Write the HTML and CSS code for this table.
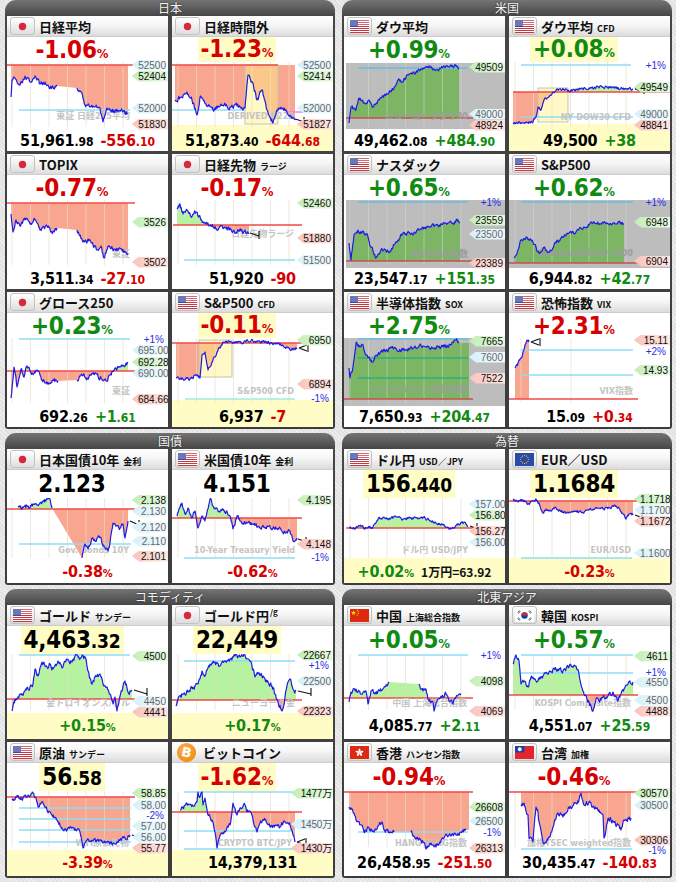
FILE: index.html
```html
<!DOCTYPE html>
<html lang="ja">
<head>
<meta charset="utf-8">
<title>マーケット</title>
<link rel="stylesheet" href="styles.css">
</head>
<body>
<svg class="defs" width="0" height="0" aria-hidden="true">
 <defs>
  <symbol id="f-jp" viewBox="0 0 19 13"><circle cx="9.5" cy="6.5" r="3.7" fill="#d8283a"/></symbol>
  <symbol id="f-us" viewBox="0 0 19 13"><rect width="19" height="13" fill="#fff"/><path d="M0 0h19v1H0zM0 2h19v1H0zM0 4h19v1H0zM0 6h19v1H0zM0 8h19v1H0zM0 10h19v1H0zM0 12h19v1H0z" fill="#c9363f"/><rect width="8" height="7" fill="#3b4aa0"/><rect width="19" height="6" fill="#fff" opacity=".25"/></symbol>
  <symbol id="f-cn" viewBox="0 0 19 13"><rect width="19" height="13" fill="#de2910"/><polygon points="3.5,1.3 4.1,3.1 6,3.1 4.5,4.2 5.1,6 3.5,4.9 1.9,6 2.5,4.2 1,3.1 2.9,3.1" fill="#ffde00"/><circle cx="7.2" cy="1.4" r=".6" fill="#ffde00"/><circle cx="8.3" cy="2.8" r=".6" fill="#ffde00"/><circle cx="8.3" cy="4.6" r=".6" fill="#ffde00"/><circle cx="7.2" cy="6" r=".6" fill="#ffde00"/></symbol>
  <symbol id="f-kr" viewBox="0 0 19 13"><rect width="19" height="13" fill="#fff"/><circle cx="9.5" cy="6.5" r="3.2" fill="#0047a0"/><path d="M6.3 6.5a3.2 3.2 0 0 1 6.4 0z" fill="#cd2e3a"/><path d="M2.5 3.6l2.2-2M3.2 4.3l2.2-2M14.3 1.6l2.2 2M13.6 2.3l2.2 2M2.5 9.4l2.2 2M3.2 8.7l2.2 2M14.3 11.4l2.2-2M13.6 10.7l2.2-2" stroke="#111" stroke-width=".7"/></symbol>
  <symbol id="f-eu" viewBox="0 0 19 13"><rect width="19" height="13" fill="#2a4aa8"/><g fill="#ffd800"><circle cx="9.5" cy="2.6" r=".55"/><circle cx="11.45" cy="3.1" r=".55"/><circle cx="12.9" cy="4.55" r=".55"/><circle cx="13.4" cy="6.5" r=".55"/><circle cx="12.9" cy="8.45" r=".55"/><circle cx="11.45" cy="9.9" r=".55"/><circle cx="9.5" cy="10.4" r=".55"/><circle cx="7.55" cy="9.9" r=".55"/><circle cx="6.1" cy="8.45" r=".55"/><circle cx="5.6" cy="6.5" r=".55"/><circle cx="6.1" cy="4.55" r=".55"/><circle cx="7.55" cy="3.1" r=".55"/></g></symbol>
  <symbol id="f-hk" viewBox="0 0 19 13"><rect width="19" height="13" fill="#de2910"/><g fill="#fff"><ellipse cx="9.5" cy="4.4" rx="1" ry="2"/><ellipse cx="9.5" cy="4.4" rx="1" ry="2" transform="rotate(72 9.5 6.5)"/><ellipse cx="9.5" cy="4.4" rx="1" ry="2" transform="rotate(144 9.5 6.5)"/><ellipse cx="9.5" cy="4.4" rx="1" ry="2" transform="rotate(216 9.5 6.5)"/><ellipse cx="9.5" cy="4.4" rx="1" ry="2" transform="rotate(288 9.5 6.5)"/></g></symbol>
  <symbol id="f-tw" viewBox="0 0 19 13"><rect width="19" height="13" fill="#e3262d"/><rect width="9.5" height="6.5" fill="#1f3e9e"/><circle cx="4.75" cy="3.25" r="1.9" fill="#fff"/></symbol>
 </defs>
</svg>

<main class="page">

<!-- ===================== 日本 ===================== -->
<section class="sec">
 <h2 class="sh">日本</h2>
 <div class="cards">

  <div class="card idx">
   <div class="ch"><span class="fg"><svg><use href="#f-jp"/></svg></span><span class="nm">日経平均</span></div>
   <div class="top"><span class="pct dn">-1.06<small>%</small></span></div>
   <div class="chart">
    <svg class="cv" viewBox="2 0 161 68" preserveAspectRatio="none" data-base="3" data-seed="1" data-pts="6,35 7,18 10,16 15,23 20,14 25,20 30,14 35,22 40,20 45,26 52,24 !72,26 76,30 80,43 88,44 95,46 98,60 102,46 110,50 116,48 123,51">
     <g class="fl"></g>
     <line class="hl" x1="14" x2="125" y1="48" y2="48"/>
     <line class="bl" x1="2" x2="130" y1="3" y2="3"/>
     <text class="wm" x="125" y="57">東証 日経225平均</text>
     <g class="ln"></g>
    </svg>
    <span class="tg b" style="--y:3px">52500</span>
    <span class="tg g" style="--y:14px">52404</span>
    <span class="tg b" style="--y:46px">52000</span>
    <span class="tg p" style="--y:62px">51830</span>
   </div>
   <div class="bot"><span class="v">51,961<small>.98</small></span><span class="dn">-556<small>.10</small></span></div>
  </div>

  <div class="card idx">
   <div class="ch"><span class="fg"><svg><use href="#f-jp"/></svg></span><span class="nm">日経時間外</span></div>
   <div class="top"><span class="pct dn yl">-1.23<small>%</small></span></div>
   <div class="chart">
    <svg class="cv" viewBox="1 0 161 68" preserveAspectRatio="none" data-base="3" data-seed="2" data-pts="4,38 11,35 16,30 21,38 26,53 29,35 35,42 42,48 50,42 59,45 66,44 74,46 77,13 82,21 86,38 91,28 96,48 102,61 106,48 112,46 119,53 124,58">
     <rect class="yb" x="0" y="63" width="170" height="6"/>
     <g class="fl"></g>
     <rect class="ybox" x="74" y="3" width="33" height="59"/>
     <line class="hl" x1="1" x2="74" y1="48" y2="48"/>
     <line class="mg" x1="114" x2="162" y1="50" y2="50"/>
     <line class="bl" x1="1" x2="107" y1="3" y2="3"/>
     <text class="wm" x="123" y="57">DERIVED N225</text>
     <g class="ln"></g>
     <path class="tk" d="M124 57L134 60M133 55V63"/>
    </svg>
    <span class="tg b" style="--y:3px">52500</span>
    <span class="tg g" style="--y:14px">52414</span>
    <span class="tg b" style="--y:46px">52000</span>
    <span class="tg p" style="--y:62px">51827</span>
   </div>
   <div class="bot y"><span class="v">51,873<small>.40</small></span><span class="dn">-644<small>.68</small></span></div>
  </div>

  <div class="card idx">
   <div class="ch"><span class="fg"><svg><use href="#f-jp"/></svg></span><span class="nm">TOPIX</span></div>
   <div class="top"><span class="pct dn">-0.77<small>%</small></span></div>
   <div class="chart">
    <svg class="cv" viewBox="2 0 161 68" preserveAspectRatio="none" data-base="3" data-seed="3" data-pts="6,14 8,32 11,20 15,26 20,18 25,24 30,20 35,30 42,26 48,32 52,28 !72,30 78,42 85,40 92,50 96,46 99,58 103,46 110,50 116,49 123,55">
     <g class="fl"></g>
     <line class="bl" x1="2" x2="130" y1="3" y2="3"/>
     <text class="wm" x="125" y="57">東証</text>
     <g class="ln"></g>
    </svg>
    <span class="tg g" style="--y:22px">3526</span>
    <span class="tg p" style="--y:62px">3502</span>
   </div>
   <div class="bot"><span class="v">3,511<small>.34</small></span><span class="dn">-27<small>.10</small></span></div>
  </div>

  <div class="card idx">
   <div class="ch"><span class="fg"><svg><use href="#f-jp"/></svg></span><span class="nm">日経先物<small>ラージ</small></span></div>
   <div class="top"><span class="pct dn">-0.17<small>%</small></span></div>
   <div class="chart">
    <svg class="cv" viewBox="1 0 161 68" preserveAspectRatio="none" data-base="25" data-seed="4" data-pts="6,8 9,4 12,14 16,10 20,17 25,12 30,20 35,24 40,26 48,28 55,27 62,31 70,31 78,33">
     <g class="fl"></g>
     <line class="hl" x1="13" x2="124" y1="60" y2="60"/>
     <line class="bl" x1="2" x2="131" y1="25" y2="25"/>
     <text class="wm" x="123" y="37">日経先物ラージ</text>
     <g class="ln"></g>
     <path class="tk" d="M79 33L88 36M88 31V39"/>
    </svg>
    <span class="tg g" style="--y:3px">52460</span>
    <span class="tg p" style="--y:38px">51880</span>
    <span class="tg b" style="--y:60px">51500</span>
   </div>
   <div class="bot"><span class="v">51,920</span><span class="dn">-90</span></div>
  </div>

  <div class="card idx">
   <div class="ch"><span class="fg"><svg><use href="#f-jp"/></svg></span><span class="nm">グロース250</span></div>
   <div class="top"><span class="pct up">+0.23<small>%</small></span></div>
   <div class="chart">
    <svg class="cv" viewBox="2 0 161 68" preserveAspectRatio="none" data-base="33" data-seed="5" data-pts="6,60 9,29 12,49 16,31 19,39 22,28 27,35 32,32 37,42 42,46 48,42 53,43 !72,42 77,37 82,40 88,36 95,40 102,43 105,37 110,30 115,29 123,25">
     <g class="fl"></g>
     <line class="hl" x1="14" x2="125" y1="1" y2="1"/>
     <line class="bl" x1="2" x2="130" y1="33" y2="33"/>
     <text class="wm" x="125" y="56">東証</text>
     <g class="ln"></g>
    </svg>
    <span class="tg t" style="--y:1px">+1%</span>
    <span class="tg b" style="--y:12px">695.00</span>
    <span class="tg g" style="--y:24px">692.28</span>
    <span class="tg b" style="--y:35px">690.00</span>
    <span class="tg p" style="--y:61px">684.66</span>
   </div>
   <div class="bot"><span class="v">692<small>.26</small></span><span class="up">+1<small>.61</small></span></div>
  </div>

  <div class="card idx">
   <div class="ch"><span class="fg"><svg><use href="#f-us"/></svg></span><span class="nm">S&amp;P500<small>CFD</small></span></div>
   <div class="top"><span class="pct dn yl">-0.11<small>%</small></span></div>
   <div class="chart">
    <svg class="cv" viewBox="1 0 161 68" preserveAspectRatio="none" data-base="5" data-seed="6" data-n="1.5" data-pts="5,40 12,41 19,41 26,37 29,40 31,17 34,14 37,32 41,24 46,14 49,10 52,4 59,4 69,4 82,3 96,4 106,6 116,9 122,12 126,10">
     <rect class="yb" x="0" y="62" width="170" height="7"/>
     <g class="fl"></g>
     <rect class="ybox" x="28" y="2" width="33" height="37"/>
     <line class="hl tl" x1="14" x2="124" y1="61" y2="61"/>
     <line class="bl" x1="1" x2="162" y1="5" y2="5"/>
     <text class="wm" x="123" y="56">S&amp;P500 CFD</text>
     <g class="ln"></g>
     <path class="tk" d="M128 10L136 7M128 10L136 13M137 6V14"/>
    </svg>
    <span class="tg g" style="--y:2px">6950</span>
    <span class="tg p" style="--y:46px">6894</span>
    <span class="tg t" style="--y:60px">-1%</span>
   </div>
   <div class="bot y"><span class="v">6,937</span><span class="dn">-7</span></div>
  </div>

 </div>
</section>

<!-- ===================== 米国 ===================== -->
<section class="sec">
 <h2 class="sh">米国</h2>
 <div class="cards">

  <div class="card idx">
   <div class="ch"><span class="fg"><svg><use href="#f-us"/></svg></span><span class="nm">ダウ平均</span></div>
   <div class="top"><span class="pct up">+0.99<small>%</small></span></div>
   <div class="chart">
    <svg class="cv gr" viewBox="1 0 161 68" preserveAspectRatio="none" data-base="56" data-seed="7" data-n="1.6" data-pts="6,61 8,45 13,48 16,36 21,41 26,38 30,45 36,38 43,33 50,28 55,18 60,20 65,13 73,10 80,6 86,4 93,8 100,5 106,5 113,4 116,7">
     <rect class="gbg" x="3" y="1" width="170" height="66"/>
     <g class="fl"></g>
     <line class="hl" x1="15" x2="125" y1="6" y2="6"/>
     <line class="bl" x1="3" x2="130" y1="56" y2="56"/>
     <text class="wm" x="125" y="57">ニューヨークダウ30</text>
     <g class="ln"></g>
    </svg>
    <span class="tg g" style="--y:5px">49509</span>
    <span class="tg b" style="--y:52px">49000</span>
    <span class="tg p" style="--y:63px">48924</span>
   </div>
   <div class="bot"><span class="v">49,462<small>.08</small></span><span class="up">+484<small>.90</small></span></div>
  </div>

  <div class="card idx">
   <div class="ch"><span class="fg"><svg><use href="#f-us"/></svg></span><span class="nm">ダウ平均<small>CFD</small></span></div>
   <div class="top"><span class="pct up yl">+0.08<small>%</small></span></div>
   <div class="chart">
    <svg class="cv" viewBox="1 0 161 68" preserveAspectRatio="none" data-base="30" data-seed="8" data-n="1.3" data-pts="5,61 15,61 25,60 28,55 30,45 33,48 36,38 41,35 45,30 51,27 58,27 61,29 68,27 81,26 95,25 108,26 118,27 125,27">
     <rect class="yb" x="0" y="62" width="170" height="7"/>
     <g class="fl"></g>
     <rect class="ybox" x="30" y="26" width="30" height="34"/>
     <line class="hl" x1="13" x2="123" y1="3" y2="3"/>
     <line class="hl" x1="13" x2="125" y1="55" y2="55"/>
     <line class="bl" x1="5" x2="162" y1="30" y2="30"/>
     <text class="wm" x="123" y="58">NY DOW30 CFD</text>
     <g class="ln"></g>
     <path class="tk" d="M127 27L135 24M127 27L135 30M136 23V32"/>
    </svg>
    <span class="tg t" style="--y:3px">+1%</span>
    <span class="tg g" style="--y:25px">49549</span>
    <span class="tg b" style="--y:52px">49000</span>
    <span class="tg p" style="--y:63px">48841</span>
   </div>
   <div class="bot y"><span class="v">49,500</span><span class="up">+38</span></div>
  </div>

  <div class="card idx">
   <div class="ch"><span class="fg"><svg><use href="#f-us"/></svg></span><span class="nm">ナスダック</span></div>
   <div class="top"><span class="pct up">+0.65<small>%</small></span></div>
   <div class="chart">
    <svg class="cv gr" viewBox="1 0 161 68" preserveAspectRatio="none" data-base="61" data-seed="9" data-n="1.8" data-pts="6,43 8,60 11,35 15,30 20,32 25,37 28,47 33,58 38,50 46,52 55,40 60,33 70,35 76,30 83,27 93,25 103,23 110,23 115,20 117,23">
     <rect class="gbg" x="3" y="0" width="170" height="68"/>
     <g class="fl"></g>
     <line class="hl" x1="15" x2="125" y1="2" y2="2"/>
     <line class="bl" x1="3" x2="130" y1="61" y2="61"/>
     <text class="wm" x="125" y="57">NASDAQ指数</text>
     <g class="ln"></g>
    </svg>
    <span class="tg t" style="--y:2px">+1%</span>
    <span class="tg g" style="--y:20px">23559</span>
    <span class="tg b" style="--y:34px">23500</span>
    <span class="tg p" style="--y:63px">23389</span>
   </div>
   <div class="bot"><span class="v">23,547<small>.17</small></span><span class="up">+151<small>.35</small></span></div>
  </div>

  <div class="card idx">
   <div class="ch"><span class="fg"><svg><use href="#f-us"/></svg></span><span class="nm">S&amp;P500</span></div>
   <div class="top"><span class="pct up">+0.62<small>%</small></span></div>
   <div class="chart">
    <svg class="cv gr" viewBox="1 0 161 68" preserveAspectRatio="none" data-base="63" data-seed="10" data-n="1.5" data-pts="6,58 10,50 13,40 18,37 23,40 28,47 31,53 36,48 41,52 48,43 55,37 61,33 68,32 76,27 85,23 95,23 105,23 111,22 116,24">
     <rect class="gbg" x="1" y="0" width="170" height="68"/>
     <g class="fl"></g>
     <line class="hl" x1="13" x2="125" y1="2" y2="2"/>
     <line class="bl" x1="1" x2="162" y1="63" y2="63"/>
     <text class="wm" x="125" y="56">Standard&amp;Poor's500</text>
     <g class="ln"></g>
    </svg>
    <span class="tg t" style="--y:2px">+1%</span>
    <span class="tg g" style="--y:22px">6948</span>
    <span class="tg p" style="--y:61px">6904</span>
   </div>
   <div class="bot"><span class="v">6,944<small>.82</small></span><span class="up">+42<small>.77</small></span></div>
  </div>

  <div class="card idx">
   <div class="ch"><span class="fg"><svg><use href="#f-us"/></svg></span><span class="nm">半導体指数<small>SOX</small></span></div>
   <div class="top"><span class="pct up">+2.75<small>%</small></span></div>
   <div class="chart">
    <svg class="cv gr" viewBox="1 0 161 68" preserveAspectRatio="none" data-base="61" data-seed="11" data-n="1.8" data-fx="126" data-pts="6,30 7,40 10,29 13,5 16,9 20,7 23,17 26,19 30,24 33,17 38,14 43,12 50,10 60,12 70,10 80,8 90,10 100,9 106,7 113,2 116,5">
     <rect class="gbg" x="1" y="0" width="170" height="68"/>
     <g class="fl"></g>
     <line class="hl" x1="15" x2="125" y1="1" y2="1"/>
     <line class="gl" x1="15" x2="125" y1="20" y2="20"/>
     <line class="gl" x1="15" x2="125" y1="40" y2="40"/>
     <line class="bl" x1="1" x2="130" y1="61" y2="61"/>
     <text class="wm s" x="125" y="54">フィラデルフィア半導体指数</text>
     <g class="ln"></g>
    </svg>
    <span class="tg g" style="--y:3px">7665</span>
    <span class="tg b" style="--y:19px">7600</span>
    <span class="tg p" style="--y:40px">7522</span>
   </div>
   <div class="bot"><span class="v">7,650<small>.93</small></span><span class="up">+204<small>.47</small></span></div>
  </div>

  <div class="card idx">
   <div class="ch"><span class="fg"><svg><use href="#f-us"/></svg></span><span class="nm">恐怖指数<small>VIX</small></span></div>
   <div class="top"><span class="pct dn">+2.31<small>%</small></span></div>
   <div class="chart">
    <svg class="cv" viewBox="1 0 161 68" preserveAspectRatio="none" data-base="61" data-seed="12" data-up="r" data-vg="13 63" data-n="1.5" data-pts="7,30 10,25 13,20 15,14 17,7 19,2 21,4">
     <g class="fl"></g>
     <line class="hl" x1="13" x2="125" y1="12" y2="12"/>
     <line class="hl" x1="13" x2="125" y1="37" y2="37"/>
     <line class="bl" x1="1" x2="130" y1="61" y2="61"/>
     <text class="wm" x="125" y="56">VIX指数</text>
     <g class="ln"></g>
     <path class="tk" d="M23 4L31 1M23 4L31 7M32 0V8"/>
    </svg>
    <span class="tg p" style="--y:2px">15.11</span>
    <span class="tg t" style="--y:13px">+2%</span>
    <span class="tg g" style="--y:32px">14.93</span>
   </div>
   <div class="bot"><span class="v">15<small>.09</small></span><span class="dn">+0<small>.34</small></span></div>
  </div>

 </div>
</section>

<!-- ===================== 国債 ===================== -->
<section class="sec">
 <h2 class="sh">国債</h2>
 <div class="cards">

  <div class="card bd">
   <div class="ch"><span class="fg"><svg><use href="#f-jp"/></svg></span><span class="nm">日本国債10年<small>金利</small></span></div>
   <div class="top"><span class="big">2.123</span></div>
   <div class="chart">
    <svg class="cv" viewBox="2 0 161 63" preserveAspectRatio="none" data-base="11" data-seed="13" data-n="1.8" data-pts="13,9 17,11 22,8 25,10 28,6 32,7 38,3 45,1 47,10 !77,60 80,46 83,51 87,40 90,43 95,39 98,48 103,53 105,45 108,25 112,28 115,30 118,26 120,40 123,23">
     <g class="fl"></g>
     <line class="hl" x1="14" x2="126" y1="46" y2="46"/>
     <line class="bl" x1="2" x2="130" y1="11" y2="11"/>
     <text class="wm" x="124" y="55">Gov. Bonds 10Y</text>
     <g class="ln"></g>
     <path class="tk" d="M125 23L134 27M134 22V30"/>
    </svg>
    <span class="tg g" style="--y:2px">2.138</span>
    <span class="tg b" style="--y:13px">2.130</span>
    <span class="tg b" style="--y:29px">2.120</span>
    <span class="tg b" style="--y:43px">2.110</span>
    <span class="tg p" style="--y:58px">2.101</span>
   </div>
   <div class="bot"><span class="pct2 dn">-0.38<small>%</small></span></div>
  </div>

  <div class="card bd">
   <div class="ch"><span class="fg"><svg><use href="#f-us"/></svg></span><span class="nm">米国債10年<small>金利</small></span></div>
   <div class="top"><span class="big">4.151</span></div>
   <div class="chart">
    <svg class="cv" viewBox="1 0 161 63" preserveAspectRatio="none" data-base="20" data-seed="14" data-n="1.8" data-pts="6,18 11,5 14,16 17,10 21,20 24,13 27,30 31,18 34,23 39,1 42,8 47,13 52,11 59,18 62,31 66,18 69,23 76,25 82,26 89,30 96,28 102,30 109,30 112,35 119,33 122,43 126,40">
     <g class="fl"></g>
     <line class="hl" x1="13" x2="124" y1="60" y2="60"/>
     <line class="bl" x1="1" x2="131" y1="20" y2="20"/>
     <text class="wm" x="124" y="55">10-Year Treasury Yield</text>
     <g class="ln"></g>
     <path class="tk" d="M127 41L136 44M135 39V46"/>
    </svg>
    <span class="tg g" style="--y:2px">4.195</span>
    <span class="tg p" style="--y:46px">4.148</span>
    <span class="tg t" style="--y:59px">-1%</span>
   </div>
   <div class="bot"><span class="pct2 dn">-0.62<small>%</small></span></div>
  </div>

 </div>
</section>

<!-- ===================== 為替 ===================== -->
<section class="sec">
 <h2 class="sh">為替</h2>
 <div class="cards">

  <div class="card bd">
   <div class="ch"><span class="fg"><svg><use href="#f-us"/></svg></span><span class="nm">ドル円<small>USD／JPY</small></span></div>
   <div class="top"><span class="big yl">156<small>.440</small></span></div>
   <div class="chart">
    <svg class="cv" viewBox="1 0 161 63" preserveAspectRatio="none" data-base="30" data-seed="15" data-n="1.2" data-pts="6,30 11,31 16,28 23,30 30,29 35,21 40,20 46,21 53,19 60,21 66,20 73,20 80,19 86,22 93,25 100,27 106,31 111,30 116,26 121,24 125,28">
     <rect class="yb" x="0" y="60" width="170" height="4"/>
     <g class="fl"></g>
     <line class="bl" x1="3" x2="130" y1="30" y2="30"/>
     <text class="wm" x="125" y="55">ドル円 USD/JPY</text>
     <g class="ln"></g>
     <path class="tk" d="M127 28L135 31M134 25V33"/>
    </svg>
    <span class="tg b" style="--y:6px">157.00</span>
    <span class="tg g" style="--y:17px">156.80</span>
    <span class="tg p" style="--y:33px">156.27</span>
    <span class="tg b" style="--y:44px">156.00</span>
   </div>
   <div class="bot y"><span class="pct2 up">+0.02<small>%</small></span><span class="yen">1万円=63.92</span></div>
  </div>

  <div class="card bd">
   <div class="ch"><span class="fg"><svg><use href="#f-eu"/></svg></span><span class="nm">EUR／USD</span></div>
   <div class="top"><span class="big yl">1.1684</span></div>
   <div class="chart">
    <svg class="cv" viewBox="1 0 161 63" preserveAspectRatio="none" data-base="3" data-seed="16" data-n="1.2" data-pts="5,1 10,4 15,2 20,6 25,3 28,1 31,5 35,15 38,11 41,13 48,10 55,14 61,15 68,13 75,15 81,12 88,10 95,11 101,10 108,8 111,10 115,16 118,21 121,16 125,17">
     <rect class="yb" x="0" y="60" width="170" height="4"/>
     <g class="fl"></g>
     <line class="hl" x1="13" x2="124" y1="60" y2="60"/>
     <line class="bl" x1="1" x2="162" y1="3" y2="3"/>
     <text class="wm" x="123" y="55">EUR/USD</text>
     <g class="ln"></g>
     <path class="tk" d="M127 17L135 20M134 15V23"/>
    </svg>
    <span class="tg g" style="--y:1px">1.1718</span>
    <span class="tg b" style="--y:12px">1.1700</span>
    <span class="tg p" style="--y:23px">1.1672</span>
    <span class="tg b" style="--y:55px">1.1600</span>
   </div>
   <div class="bot y"><span class="pct2 dn">-0.23<small>%</small></span></div>
  </div>

 </div>
</section>

<!-- ===================== コモディティ ===================== -->
<section class="sec">
 <h2 class="sh">コモディティ</h2>
 <div class="cards">

  <div class="card cm">
   <div class="ch"><span class="fg"><svg><use href="#f-us"/></svg></span><span class="nm">ゴールド<small>サンデー</small></span></div>
   <div class="top"><span class="big yl">4,463<small>.32</small></span></div>
   <div class="chart">
    <svg class="cv" viewBox="2 0 161 59" preserveAspectRatio="none" data-base="45" data-seed="17" data-n="2.2" data-pts="7,57 10,45 15,40 20,37 25,33 28,30 30,15 33,22 37,8 42,13 45,10 48,15 53,7 58,13 62,5 67,8 72,1 75,5 80,3 83,17 87,30 90,23 95,20 98,30 102,33 105,40 108,50 110,43 112,57 115,42 120,27 123,38 127,36">
     <g class="fl"></g>
     <line class="hl" x1="14" x2="125" y1="1" y2="1"/>
     <line class="bl" x1="2" x2="130" y1="45" y2="45"/>
     <text class="wm" x="125" y="52">金トロイオンス/ドル</text>
     <g class="ln"></g>
     <path class="tk" d="M129 36L142 40M142 34V42"/>
    </svg>
    <span class="tg g" style="--y:2px">4500</span>
    <span class="tg b" style="--y:47px">4450</span>
    <span class="tg p" style="--y:58px">4441</span>
   </div>
   <div class="bot y"><span class="pct2 up">+0.15<small>%</small></span></div>
  </div>

  <div class="card cm">
   <div class="ch"><span class="fg"><svg><use href="#f-jp"/></svg></span><span class="nm">ゴールド円<sup>/g</sup></span></div>
   <div class="top"><span class="big yl">22,449</span></div>
   <div class="chart">
    <svg class="cv" viewBox="1 0 161 59" preserveAspectRatio="none" data-base="46" data-seed="18" data-n="2.2" data-pts="5,52 7,45 12,40 17,38 22,33 27,30 31,17 34,22 39,10 44,8 49,12 54,7 59,5 64,2 69,3 74,1 77,5 81,12 84,23 87,20 92,22 96,28 101,32 104,40 107,48 111,57 114,43 117,28 119,25 122,35 125,37">
     <g class="fl"></g>
     <line class="hl" x1="13" x2="124" y1="7" y2="7"/>
     <line class="bl" x1="1" x2="131" y1="46" y2="46"/>
     <text class="wm" x="124" y="52">ニューヨーク金</text>
     <g class="ln"></g>
     <path class="tk" d="M127 37L140 40M140 34V42"/>
    </svg>
    <span class="tg g" style="--y:1px">22667</span>
    <span class="tg t" style="--y:11px">+1%</span>
    <span class="tg b" style="--y:27px">22500</span>
    <span class="tg p" style="--y:57px">22323</span>
   </div>
   <div class="bot y"><span class="pct2 up">+0.17<small>%</small></span></div>
  </div>

  <div class="card cm">
   <div class="ch"><span class="fg"><svg><use href="#f-us"/></svg></span><span class="nm">原油<small>サンデー</small></span></div>
   <div class="top"><span class="big yl">56<small>.58</small></span></div>
   <div class="chart">
    <svg class="cv" viewBox="2 0 161 59" preserveAspectRatio="none" data-base="6" data-seed="19" data-n="1.8" data-pts="7,9 12,6 18,7 25,5 28,2 31,7 33,16 37,11 42,19 47,24 52,29 57,37 62,39 67,37 72,39 75,41 78,57 82,49 88,50 95,49 102,51 108,52 115,49 120,47 125,44">
     <g class="fl"></g>
     <line class="hl" x1="14" x2="126" y1="17" y2="17"/>
     <line class="hl" x1="14" x2="126" y1="28" y2="28"/>
     <line class="hl" x1="14" x2="126" y1="39" y2="39"/>
     <line class="hl" x1="14" x2="126" y1="51" y2="51"/>
     <line class="bl" x1="2" x2="130" y1="6" y2="6"/>
     <text class="wm" x="124" y="55">WTI原油先物</text>
     <g class="ln"></g>
     <path class="tk" d="M127 44L140 48M140 42V50"/>
    </svg>
    <span class="tg g" style="--y:2px">58.85</span>
    <span class="tg b" style="--y:14px">58.00</span>
    <span class="tg t" style="--y:24.5px">-2%</span>
    <span class="tg b" style="--y:35px">57.00</span>
    <span class="tg b" style="--y:46px">56.00</span>
    <span class="tg p" style="--y:57px">55.77</span>
   </div>
   <div class="bot y"><span class="pct2 dn">-3.39<small>%</small></span></div>
  </div>

  <div class="card cm">
   <div class="ch"><span class="btc">B</span><span class="nm">ビットコイン</span></div>
   <div class="top"><span class="pct dn yl">-1.62<small>%</small></span></div>
   <div class="chart">
    <svg class="cv" viewBox="1 0 161 59" preserveAspectRatio="none" data-base="21" data-seed="20" data-n="2" data-pts="9,19 12,16 17,13 22,15 26,11 27,1 29,6 31,1 32,14 34,7 37,24 41,29 44,41 46,57 49,44 54,41 59,34 62,12 66,24 69,17 74,14 77,21 81,24 84,36 86,41 89,32 94,29 99,36 104,34 109,36 114,31 119,34 122,44 124,51">
     <g class="fl"></g>
     <line class="hl" x1="13" x2="124" y1="1" y2="1"/>
     <line class="hl" x1="13" x2="124" y1="40" y2="40"/>
     <line class="hl" x1="13" x2="124" y1="58" y2="58"/>
     <line class="bl" x1="1" x2="131" y1="21" y2="21"/>
     <text class="wm" x="121" y="55">CRYPTO BTC/JPY</text>
     <g class="ln"></g>
     <path class="tk" d="M126 51L134 48M126 51L134 54M135 47V55"/>
    </svg>
    <span class="tg g w" style="--y:2px">1477万</span>
    <span class="tg b w" style="--y:33px">1450万</span>
    <span class="tg p w" style="--y:57px">1430万</span>
   </div>
   <div class="bot y"><span class="v">14,379,131</span></div>
  </div>

 </div>
</section>

<!-- ===================== 北東アジア ===================== -->
<section class="sec">
 <h2 class="sh">北東アジア</h2>
 <div class="cards">

  <div class="card cm">
   <div class="ch"><span class="fg"><svg><use href="#f-cn"/></svg></span><span class="nm">中国<small>上海総合指数</small></span></div>
   <div class="top"><span class="pct up">+0.05<small>%</small></span></div>
   <div class="chart">
    <svg class="cv" viewBox="1 0 161 59" preserveAspectRatio="none" data-base="44" data-seed="21" data-n="2" data-pts="6,48 8,38 13,35 18,40 23,37 25,50 28,37 33,40 40,35 45,30 46,28 !76,30 80,37 83,35 86,47 90,48 91,57 95,45 100,43 103,40 106,47 110,50 113,43 118,41">
     <g class="fl"></g>
     <line class="hl" x1="15" x2="125" y1="1" y2="1"/>
     <line class="bl" x1="1" x2="130" y1="44" y2="44"/>
     <text class="wm" x="124" y="52">中国 上海総合指数</text>
     <g class="ln"></g>
    </svg>
    <span class="tg t" style="--y:1px">+1%</span>
    <span class="tg g" style="--y:27px">4098</span>
    <span class="tg p" style="--y:57px">4069</span>
   </div>
   <div class="bot"><span class="v">4,085<small>.77</small></span><span class="up">+2<small>.11</small></span></div>
  </div>

  <div class="card cm">
   <div class="ch"><span class="fg"><svg><use href="#f-kr"/></svg></span><span class="nm">韓国<small>KOSPI</small></span></div>
   <div class="top"><span class="pct up">+0.57<small>%</small></span></div>
   <div class="chart">
    <svg class="cv" viewBox="1 0 161 59" preserveAspectRatio="none" data-base="41" data-seed="22" data-n="2" data-pts="5,10 8,1 11,7 13,30 16,27 20,33 23,23 28,27 35,22 41,18 48,15 55,17 61,13 68,12 71,20 76,40 81,48 85,57 88,45 91,47 95,43 100,42 105,38 110,47 113,40 116,35 120,30 125,28">
     <g class="fl"></g>
     <line class="hl" x1="13" x2="125" y1="1" y2="1"/>
     <line class="hl" x1="13" x2="125" y1="19" y2="19"/>
     <line class="bl" x1="1" x2="130" y1="41" y2="41"/>
     <text class="wm" x="123" y="52">KOSPI Composite指数</text>
     <g class="ln"></g>
    </svg>
    <span class="tg g" style="--y:2px">4611</span>
    <span class="tg t" style="--y:18px">+1%</span>
    <span class="tg b" style="--y:28px">4550</span>
    <span class="tg b" style="--y:46px">4500</span>
    <span class="tg p" style="--y:57px">4488</span>
   </div>
   <div class="bot"><span class="v">4,551<small>.07</small></span><span class="up">+25<small>.59</small></span></div>
  </div>

  <div class="card cm">
   <div class="ch"><span class="fg"><svg><use href="#f-hk"/></svg></span><span class="nm">香港<small>ハンセン指数</small></span></div>
   <div class="top"><span class="pct dn">-0.94<small>%</small></span></div>
   <div class="chart">
    <svg class="cv" viewBox="1 0 161 59" preserveAspectRatio="none" data-base="1" data-seed="23" data-n="2" data-fx="126" data-pts="6,16 10,21 13,29 18,34 21,41 26,37 31,41 36,34 39,31 41,39 46,41 51,41 !68,41 73,47 80,51 83,58 88,52 93,56 100,47 106,44 113,44 118,41 123,39">
     <g class="fl"></g>
     <line class="hl" x1="15" x2="125" y1="41" y2="41"/>
     <line class="bl" x1="1" x2="130" y1="1" y2="1"/>
     <text class="wm" x="124" y="55">HANG SENG指数</text>
     <g class="ln"></g>
    </svg>
    <span class="tg g" style="--y:16px">26608</span>
    <span class="tg b" style="--y:30px">26500</span>
    <span class="tg t" style="--y:41px">-1%</span>
    <span class="tg p" style="--y:57px">26313</span>
   </div>
   <div class="bot"><span class="v">26,458<small>.95</small></span><span class="dn">-251<small>.50</small></span></div>
  </div>

  <div class="card cm">
   <div class="ch"><span class="fg"><svg><use href="#f-tw"/></svg></span><span class="nm">台湾<small>加権</small></span></div>
   <div class="top"><span class="pct dn">-0.46<small>%</small></span></div>
   <div class="chart">
    <svg class="cv" viewBox="1 0 161 59" preserveAspectRatio="none" data-base="1" data-seed="24" data-n="2.2" data-pts="13,14 16,12 20,24 21,47 25,51 28,16 30,21 31,31 35,51 38,52 41,46 45,36 50,22 55,26 61,16 68,12 71,9 73,2 76,14 81,11 86,16 91,19 95,24 96,47 100,27 105,31 110,34 113,39 116,29 120,27 123,27">
     <g class="fl"></g>
     <line class="hl" x1="13" x2="124" y1="58" y2="58"/>
     <line class="bl" x1="1" x2="130" y1="1" y2="1"/>
     <text class="wm" x="123" y="55">加権TSEC weighted指数</text>
     <g class="ln"></g>
    </svg>
    <span class="tg g" style="--y:2px">30570</span>
    <span class="tg b" style="--y:14px">30500</span>
    <span class="tg p" style="--y:49px">30306</span>
    <span class="tg t" style="--y:59px">-1%</span>
   </div>
   <div class="bot"><span class="v">30,435<small>.47</small></span><span class="dn">-140<small>.83</small></span></div>
  </div>

 </div>
</section>

</main>
<script src="script.js"></script>
</body>
</html>
```

FILE: styles.css
```css
*{box-sizing:border-box;margin:0;padding:0}
html,body{width:676px;height:882px;overflow:hidden}
body{
  background-color:#e2e2e2;
  background-image:repeating-linear-gradient(45deg,rgba(255,255,255,.45) 0 1px,transparent 1px 3px);
  font-family:"Noto Sans CJK JP","Noto Sans",sans-serif;
  color:#000;
}
.defs{position:absolute;width:0;height:0;overflow:hidden}

.page{
  display:grid;
  grid-template-columns:330px 330px;
  column-gap:7px;
  row-gap:4px;
  padding:0 5px;
  align-items:start;
}

.sec{
  background:linear-gradient(#747474 0,#464646 16px,#3c3c3c 100%);
  border-radius:11px 11px 3px 3px;
  padding:0 2px 2px;
}
.sh{
  height:16px;
  line-height:16px;
  text-align:center;
  color:#f4f4f4;
  font-size:12px;
  font-weight:400;
  text-shadow:0 0 2px #222;
}
.cards{
  display:grid;
  grid-template-columns:1fr 1fr;
  gap:3px 4px;
}

.card{
  background:#fff;
  display:flex;
  flex-direction:column;
  position:relative;
  overflow:hidden;
}
.card.idx{height:135px}
.card.bd,.card.cm{height:134px}

/* header */
.ch{
  flex:none;
  height:21px;
  display:flex;
  align-items:center;
  gap:4px;
  padding-left:3px;
  background:linear-gradient(#ffffff 0,#f6f6f6 45%,#dcdcdc 100%);
  border-bottom:1px solid #cdcdcd;
}
.fg{
  flex:none;
  width:25px;
  height:18px;
  border:1px solid #c2c2c2;
  border-radius:3px;
  background:linear-gradient(#ffffff,#dedede);
  display:flex;
  align-items:center;
  justify-content:center;
}
.fg svg{width:19px;height:13px;display:block}
.btc{
  flex:none;
  width:19px;
  height:19px;
  margin:0 3px 0 2px;
  border-radius:50%;
  background:radial-gradient(circle at 40% 35%,#fbb04a,#f39019 70%,#e07d0c);
  color:#fff;
  font:700 13px/19px "DejaVu Sans",sans-serif;
  text-align:center;
  transform:rotate(12deg);
}
.nm{
  font-weight:700;
  font-size:13px;
  color:#111;
  white-space:nowrap;
  line-height:1;
}
.nm small{font-size:9px;margin-left:4px;font-weight:700}
.nm sup{font-size:8px;vertical-align:6px;margin-left:1px}

/* top row */
.top{
  flex:none;
  width:130px;
  height:25px;
  display:flex;
  align-items:center;
  justify-content:center;
}
.bd .top,.cm .top{height:28px}
.pct,.big,.bot,.pct2{
  font-family:"DejaVu Sans Condensed","DejaVu Sans",sans-serif;
  font-stretch:condensed;
  font-weight:700;
  line-height:1;
  white-space:nowrap;
}
.pct{font-size:24px;letter-spacing:-.2px}
.pct small{font-size:13px;letter-spacing:0}
.big{font-size:24px;color:#000;letter-spacing:-.2px}
.big small{font-size:19px}
.yl{
  display:block;
  background:#fffcc6;
  height:100%;
  line-height:25px;
  padding:0 3px;
}
.bd .yl,.cm .yl{line-height:29px}
.up{color:#108a10}
.dn{color:#d50000}

/* chart */
.chart{
  flex:1;
  position:relative;
  min-height:0;
}
.chart svg{display:block;width:100%;height:100%}
.gbg{fill:#bdbdbd}
.yb{fill:#fffcc6}
.ybox{fill:rgba(255,240,130,.45);stroke:#c6c3a8;stroke-width:1}
.vgl{stroke:#e3ddc4;stroke-opacity:.65;stroke-width:1}
.gr .vgl{stroke:#dadada;stroke-opacity:.5}
.hl{stroke:#8fdcf6;stroke-width:1.6}
.hl.tl{stroke:#a6ead8}
.gr .hl{stroke:#68bfdf}
.gl{stroke:#2fae72;stroke-width:1.4}
.mg{stroke:#f07ef0;stroke-width:1.4}
.bl{stroke:#f04a4a;stroke-width:1.6}
.gr .bl{stroke:#c84e4e}
.pl{fill:none;stroke:#1c1ce6;stroke-width:1.2;stroke-linejoin:round}
.tk{fill:none;stroke:#111;stroke-width:1.1}
.wm{
  font-family:"DejaVu Sans Condensed","DejaVu Sans","Noto Sans CJK JP",sans-serif;
  font-size:9px;
  font-weight:700;
  fill:#c4c4c4;
  text-anchor:end;
}
.wm.s{font-size:7.5px}
.gr .wm{fill:#9c9c9c}

/* right labels */
.tg{
  position:absolute;
  right:0;
  top:calc(var(--y) - 5.5px);
  width:36px;
  height:11px;
  padding:0 2px 0 6px;
  font:400 10px/11px "Liberation Sans","Noto Sans CJK JP",sans-serif;
  text-align:right;
  color:#111;
  white-space:nowrap;
  clip-path:polygon(7px 0,100% 0,100% 100%,7px 100%,0 50%);
}
.tg.w{width:42px;padding-right:1px;letter-spacing:-.2px}
.tg.g{background:linear-gradient(90deg,#c2eeb6,#e7f9e2)}
.tg.p{background:linear-gradient(90deg,#f8c3bc,#fde7e4)}
.tg.b{background:linear-gradient(90deg,#d5f0fa,#f3fbfe);color:#666}
.tg.t{background:none;clip-path:none;color:#2a2ae8;right:4px;width:auto;padding:0}

/* bottom row */
.bot{
  flex:none;
  height:21px;
  display:flex;
  align-items:center;
  justify-content:center;
  gap:7px;
  font-size:16px;
  letter-spacing:-.2px;
  color:#000;
}
.bd .bot{height:22px}
.cm .bot{height:26px}
.bot small{font-size:12px;letter-spacing:0}
.bot.y{background:#fffcc6}
.pct2{font-size:16px}
.pct2 small{font-size:11px}
.yen{font-size:12px;font-family:"Noto Sans CJK JP",sans-serif;font-weight:700;color:#111;letter-spacing:0}
```

FILE: script.js
```js
(function () {
  var NS = 'http://www.w3.org/2000/svg';
  function rng(s) {
    return function () {
      s |= 0; s = (s + 0x6D2B79F5) | 0;
      var t = Math.imul(s ^ (s >>> 15), 1 | s);
      t = (t + Math.imul(t ^ (t >>> 7), 61 | t)) ^ t;
      return ((t ^ (t >>> 14)) >>> 0) / 4294967296;
    };
  }
  function el(n, a) {
    var e = document.createElementNS(NS, n);
    for (var k in a) e.setAttribute(k, a[k]);
    return e;
  }
  var svgs = document.querySelectorAll('svg.cv');
  Array.prototype.forEach.call(svgs, function (svg, i) {
    var H = svg.viewBox.baseVal.height;
    var base = +svg.dataset.base;
    var amp = +(svg.dataset.n || 2);
    var r = rng((+(svg.dataset.seed || i + 1)) * 977 + 13);
    var gray = svg.classList.contains('gr');
    var fl = svg.querySelector('.fl'), ln = svg.querySelector('.ln');

    var pts = svg.dataset.pts.trim().split(/\s+/).map(function (p) {
      var g = p.charAt(0) === '!';
      if (g) p = p.slice(1);
      var a = p.split(',');
      return { x: +a[0], y: +a[1], g: g };
    });

    var d = '', poly = [], off = 0;
    pts.forEach(function (p, j) {
      if (j === 0) { d += 'M' + p.x + ' ' + p.y; poly.push([p.x, p.y]); return; }
      var q = pts[j - 1];
      if (p.g) { d += 'M' + p.x + ' ' + p.y; poly.push([p.x, p.y]); off = 0; return; }
      var n = Math.max(1, Math.round((p.x - q.x) * 1.5));
      for (var k = 1; k <= n; k++) {
        var t = k / n, x = q.x + (p.x - q.x) * t, y = q.y + (p.y - q.y) * t;
        if (k < n) { off = off * 0.45 + (r() - 0.5) * 2 * amp; y += off; } else { off = 0; }
        y = Math.max(0.6, Math.min(H - 0.6, y));
        d += 'L' + x.toFixed(2) + ' ' + y.toFixed(2);
        poly.push([x, y]);
      }
    });
    var last = poly[poly.length - 1];
    if (svg.dataset.fx) poly.push([+svg.dataset.fx, last[1]]);
    var lx = poly[poly.length - 1][0];
    var ps = poly.map(function (p) { return p[0].toFixed(2) + ',' + p[1].toFixed(2); }).join(' ') +
      ' ' + lx + ',' + base + ' ' + poly[0][0] + ',' + base;

    var id = 'clp' + i;
    var defs = el('defs', {});
    var c1 = el('clipPath', { id: id + 'a' });
    c1.appendChild(el('rect', { x: -10, y: -10, width: 200, height: base + 10 }));
    var c2 = el('clipPath', { id: id + 'b' });
    c2.appendChild(el('rect', { x: -10, y: base, width: 200, height: H - base + 20 }));
    defs.appendChild(c1); defs.appendChild(c2);
    svg.insertBefore(defs, svg.firstChild);

    var upRed = svg.dataset.up === 'r';
    var gc = gray ? '#7cb664' : '#b6f2a0', rc = '#f9a691';
    fl.appendChild(el('polygon', { points: ps, fill: upRed ? rc : gc, 'clip-path': 'url(#' + id + 'a)' }));
    fl.appendChild(el('polygon', { points: ps, fill: upRed ? gc : rc, 'clip-path': 'url(#' + id + 'b)' }));

    var vg = (svg.dataset.vg || '7 25.5 44 62.5 81 99.5 118').split(' ');
    vg.forEach(function (x) {
      fl.appendChild(el('line', { x1: x, x2: x, y1: 0, y2: H - 3, 'class': 'vgl' }));
    });

    ln.appendChild(el('path', { d: d, 'class': 'pl' }));
  });
})();
```
